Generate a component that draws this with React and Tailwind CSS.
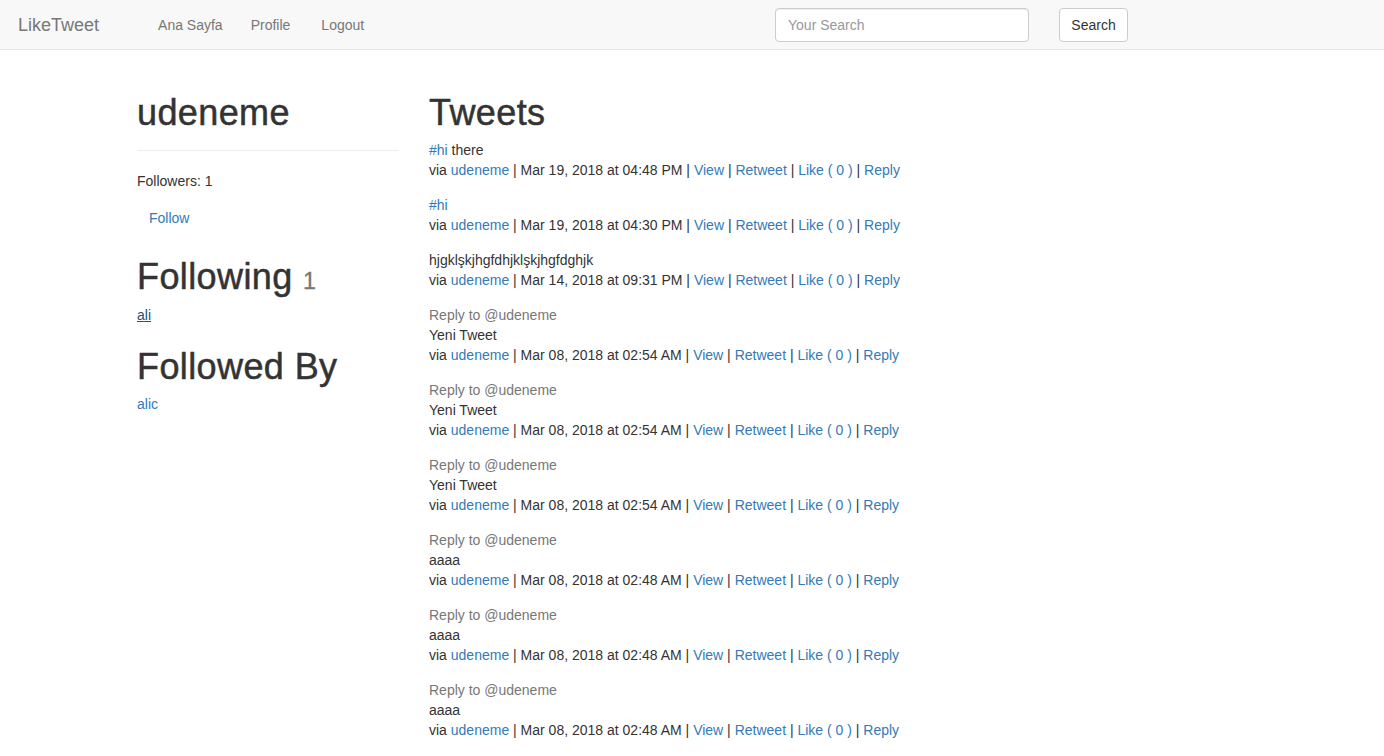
import React from "react";

const tweets = [
  { tag: "#hi", text: " there", date: "Mar 19, 2018 at 04:48 PM" },
  { tag: "#hi", text: "", date: "Mar 19, 2018 at 04:30 PM" },
  { text: "hjgklşkjhgfdhjklşkjhgfdghjk", date: "Mar 14, 2018 at 09:31 PM" },
  { reply: "@udeneme", text: "Yeni Tweet", date: "Mar 08, 2018 at 02:54 AM" },
  { reply: "@udeneme", text: "Yeni Tweet", date: "Mar 08, 2018 at 02:54 AM" },
  { reply: "@udeneme", text: "Yeni Tweet", date: "Mar 08, 2018 at 02:54 AM" },
  { reply: "@udeneme", text: "aaaa", date: "Mar 08, 2018 at 02:48 AM" },
  { reply: "@udeneme", text: "aaaa", date: "Mar 08, 2018 at 02:48 AM" },
  { reply: "@udeneme", text: "aaaa", date: "Mar 08, 2018 at 02:48 AM" },
];

const h1 =
  "text-[36px] leading-[1.1] tracking-[0.4px] [-webkit-text-stroke:0.5px_#333]";

function Tweet({ t }) {
  return (
    <div className="mb-[15px]">
      {t.reply && <div className="text-[#777]">Reply to {t.reply}</div>}
      <div>
        {t.tag && <a className="text-[#337ab7]">{t.tag}</a>}
        {t.text}
      </div>
      <div>
        via <a className="text-[#337ab7]">udeneme</a> | {t.date} |{" "}
        <a className="text-[#337ab7]">View</a> |{" "}
        <a className="text-[#337ab7]">Retweet</a> |{" "}
        <a className="text-[#337ab7]">Like ( 0 )</a> |{" "}
        <a className="text-[#337ab7]">Reply</a>
      </div>
    </div>
  );
}

export default function App() {
  return (
    <div className="min-h-screen bg-white font-['Liberation_Sans',Arial,sans-serif] text-[14px] leading-[20px] text-[#333]">
      {/* NAVBAR */}
      <nav className="h-[50px] bg-[#f8f8f8] border-b border-[#e7e7e7] flex items-center">
        <a className="pl-[18px] text-[18px] text-[#777]">LikeTweet</a>
        <ul className="flex ml-[59px] text-[#777]">
          <li>Ana Sayfa</li>
          <li className="ml-[28px]">Profile</li>
          <li className="ml-[31px]">Logout</li>
        </ul>
        <form className="ml-auto mr-[256px] flex items-center gap-[30px]">
          <input
            placeholder="Your Search"
            className="w-[254px] h-[34px] px-3 rounded border border-[#ccc] bg-white shadow-[inset_0_1px_1px_rgba(0,0,0,0.075)] placeholder:text-[#999] outline-none"
          />
          <button
            type="button"
            className="w-[69px] h-[34px] rounded border border-[#ccc] bg-white text-[#333]"
          >
            Search
          </button>
        </form>
      </nav>

      {/* CONTENT */}
      <div className="w-[1170px] mx-auto px-[15px] pt-[23px] flex">
        <div className="w-[292px] px-[15px] shrink-0">
          <h1 className={`${h1} mt-5 mb-2.5`}>udeneme</h1>
          <div className="border-b border-[#eee] mb-5 pt-[7px]" />
          <p className="mb-2.5">Followers: 1</p>
          <button className="h-[34px] px-3 text-[#337ab7]">Follow</button>
          <h1 className={`${h1} mt-[22px] mb-[9px]`}>
            Following{" "}
            <span className="text-[23.4px] text-[#777] [-webkit-text-stroke:0.3px_#777]">
              1
            </span>
          </h1>
          <a className="text-[#23527c] underline">ali</a>
          <h1 className={`${h1} mt-[22px] mb-[7px]`}>Followed By</h1>
          <a className="text-[#337ab7]">alic</a>
        </div>
        <div className="flex-1 px-[15px]">
          <h1 className={`${h1} mt-5 mb-[7px]`}>Tweets</h1>
          {tweets.map((t, i) => (
            <Tweet key={i} t={t} />
          ))}
        </div>
      </div>
    </div>
  );
}
